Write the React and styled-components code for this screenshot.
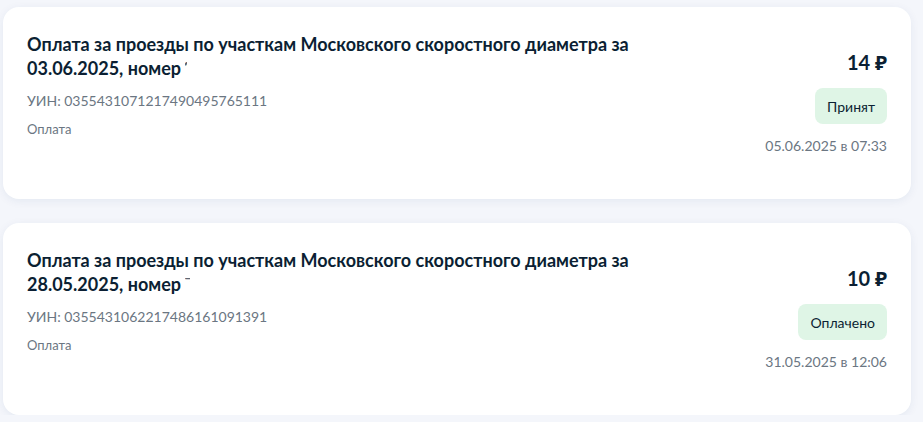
import React from 'react';
import styled, { createGlobalStyle } from 'styled-components';

const GlobalStyle = createGlobalStyle`
  body {
    margin: 0;
    background: #f4f6fb;
    font-family: Lato, "Noto Sans", sans-serif;
    color: #0b1f33;
  }
`;

const List = styled.div`
  display: flex;
  flex-direction: column;
  gap: 24px;
  padding: 7px 12px 0 3px;
`;

const Card = styled.div`
  display: flex;
  justify-content: space-between;
  min-height: 192px;
  box-sizing: border-box;
  padding: 25px 24px 24px 24px;
  background: #fff;
  border-radius: 16px;
  box-shadow: 0 2px 10px rgba(20, 50, 110, 0.07);
`;

const Info = styled.div`
  display: flex;
  flex-direction: column;
  max-width: 640px;
`;

const Title = styled.div`
  font-size: 18px;
  font-weight: 700;
  line-height: 24px;
  color: #0b1f33;
`;

/* the number is masked in the source; only the top of its first digit peeks out */
const Masked = styled.span`
  display: inline-block;
  vertical-align: top;
  height: 4px;
  width: ${p => p.$w}px;
  margin-top: 6px;
  overflow: hidden;
`;

const MaskedDigit = styled.span`
  display: block;
  margin-top: -6px;
  margin-left: ${p => p.$shift}px;
  color: #5d6672;
`;

const Uin = styled.div`
  margin-top: 11px;
  font-size: 14px;
  line-height: 20px;
  color: #6b7682;
`;

const Kind = styled.div`
  margin-top: 8px;
  font-size: 13px;
  line-height: 20px;
  color: #6b7682;
`;

const Side = styled.div`
  display: flex;
  flex-direction: column;
  align-items: flex-end;
  justify-content: center;
  margin-top: -1px;
`;

const Price = styled.div`
  font-size: 20px;
  font-weight: 700;
  line-height: 24px;
`;

const Badge = styled.div`
  margin-top: 14px;
  height: 36px;
  display: flex;
  align-items: center;
  padding: 0 12px;
  border-radius: 8px;
  background: #dff5e6;
  font-size: 14px;
  color: #0b1f33;
`;

const Date = styled.div`
  margin-top: 12px;
  font-size: 14px;
  line-height: 20px;
  color: #6b7682;
`;

const payments = [
  {
    date: '03.06.2025',
    tail: '1',
    tailW: 2,
    tailShift: -3,
    uin: '0355431071217490495765111',
    price: '14 ₽',
    status: 'Принят',
    at: '05.06.2025 в 07:33',
  },
  {
    date: '28.05.2025',
    tail: '7',
    tailW: 5,
    tailShift: -1,
    uin: '0355431062217486161091391',
    price: '10 ₽',
    status: 'Оплачено',
    at: '31.05.2025 в 12:06',
  },
];

export default function App() {
  return (
    <>
      <GlobalStyle />
      <List>
        {payments.map(p => (
          <Card key={p.uin}>
            <Info>
              <Title>
                Оплата за проезды по участкам Московского скоростного диаметра за {p.date}, номер{' '}
                <Masked $w={p.tailW}>
                  <MaskedDigit $shift={p.tailShift}>{p.tail}</MaskedDigit>
                </Masked>
              </Title>
              <Uin>УИН: {p.uin}</Uin>
              <Kind>Оплата</Kind>
            </Info>
            <Side>
              <Price>{p.price}</Price>
              <Badge>{p.status}</Badge>
              <Date>{p.at}</Date>
            </Side>
          </Card>
        ))}
      </List>
    </>
  );
}
